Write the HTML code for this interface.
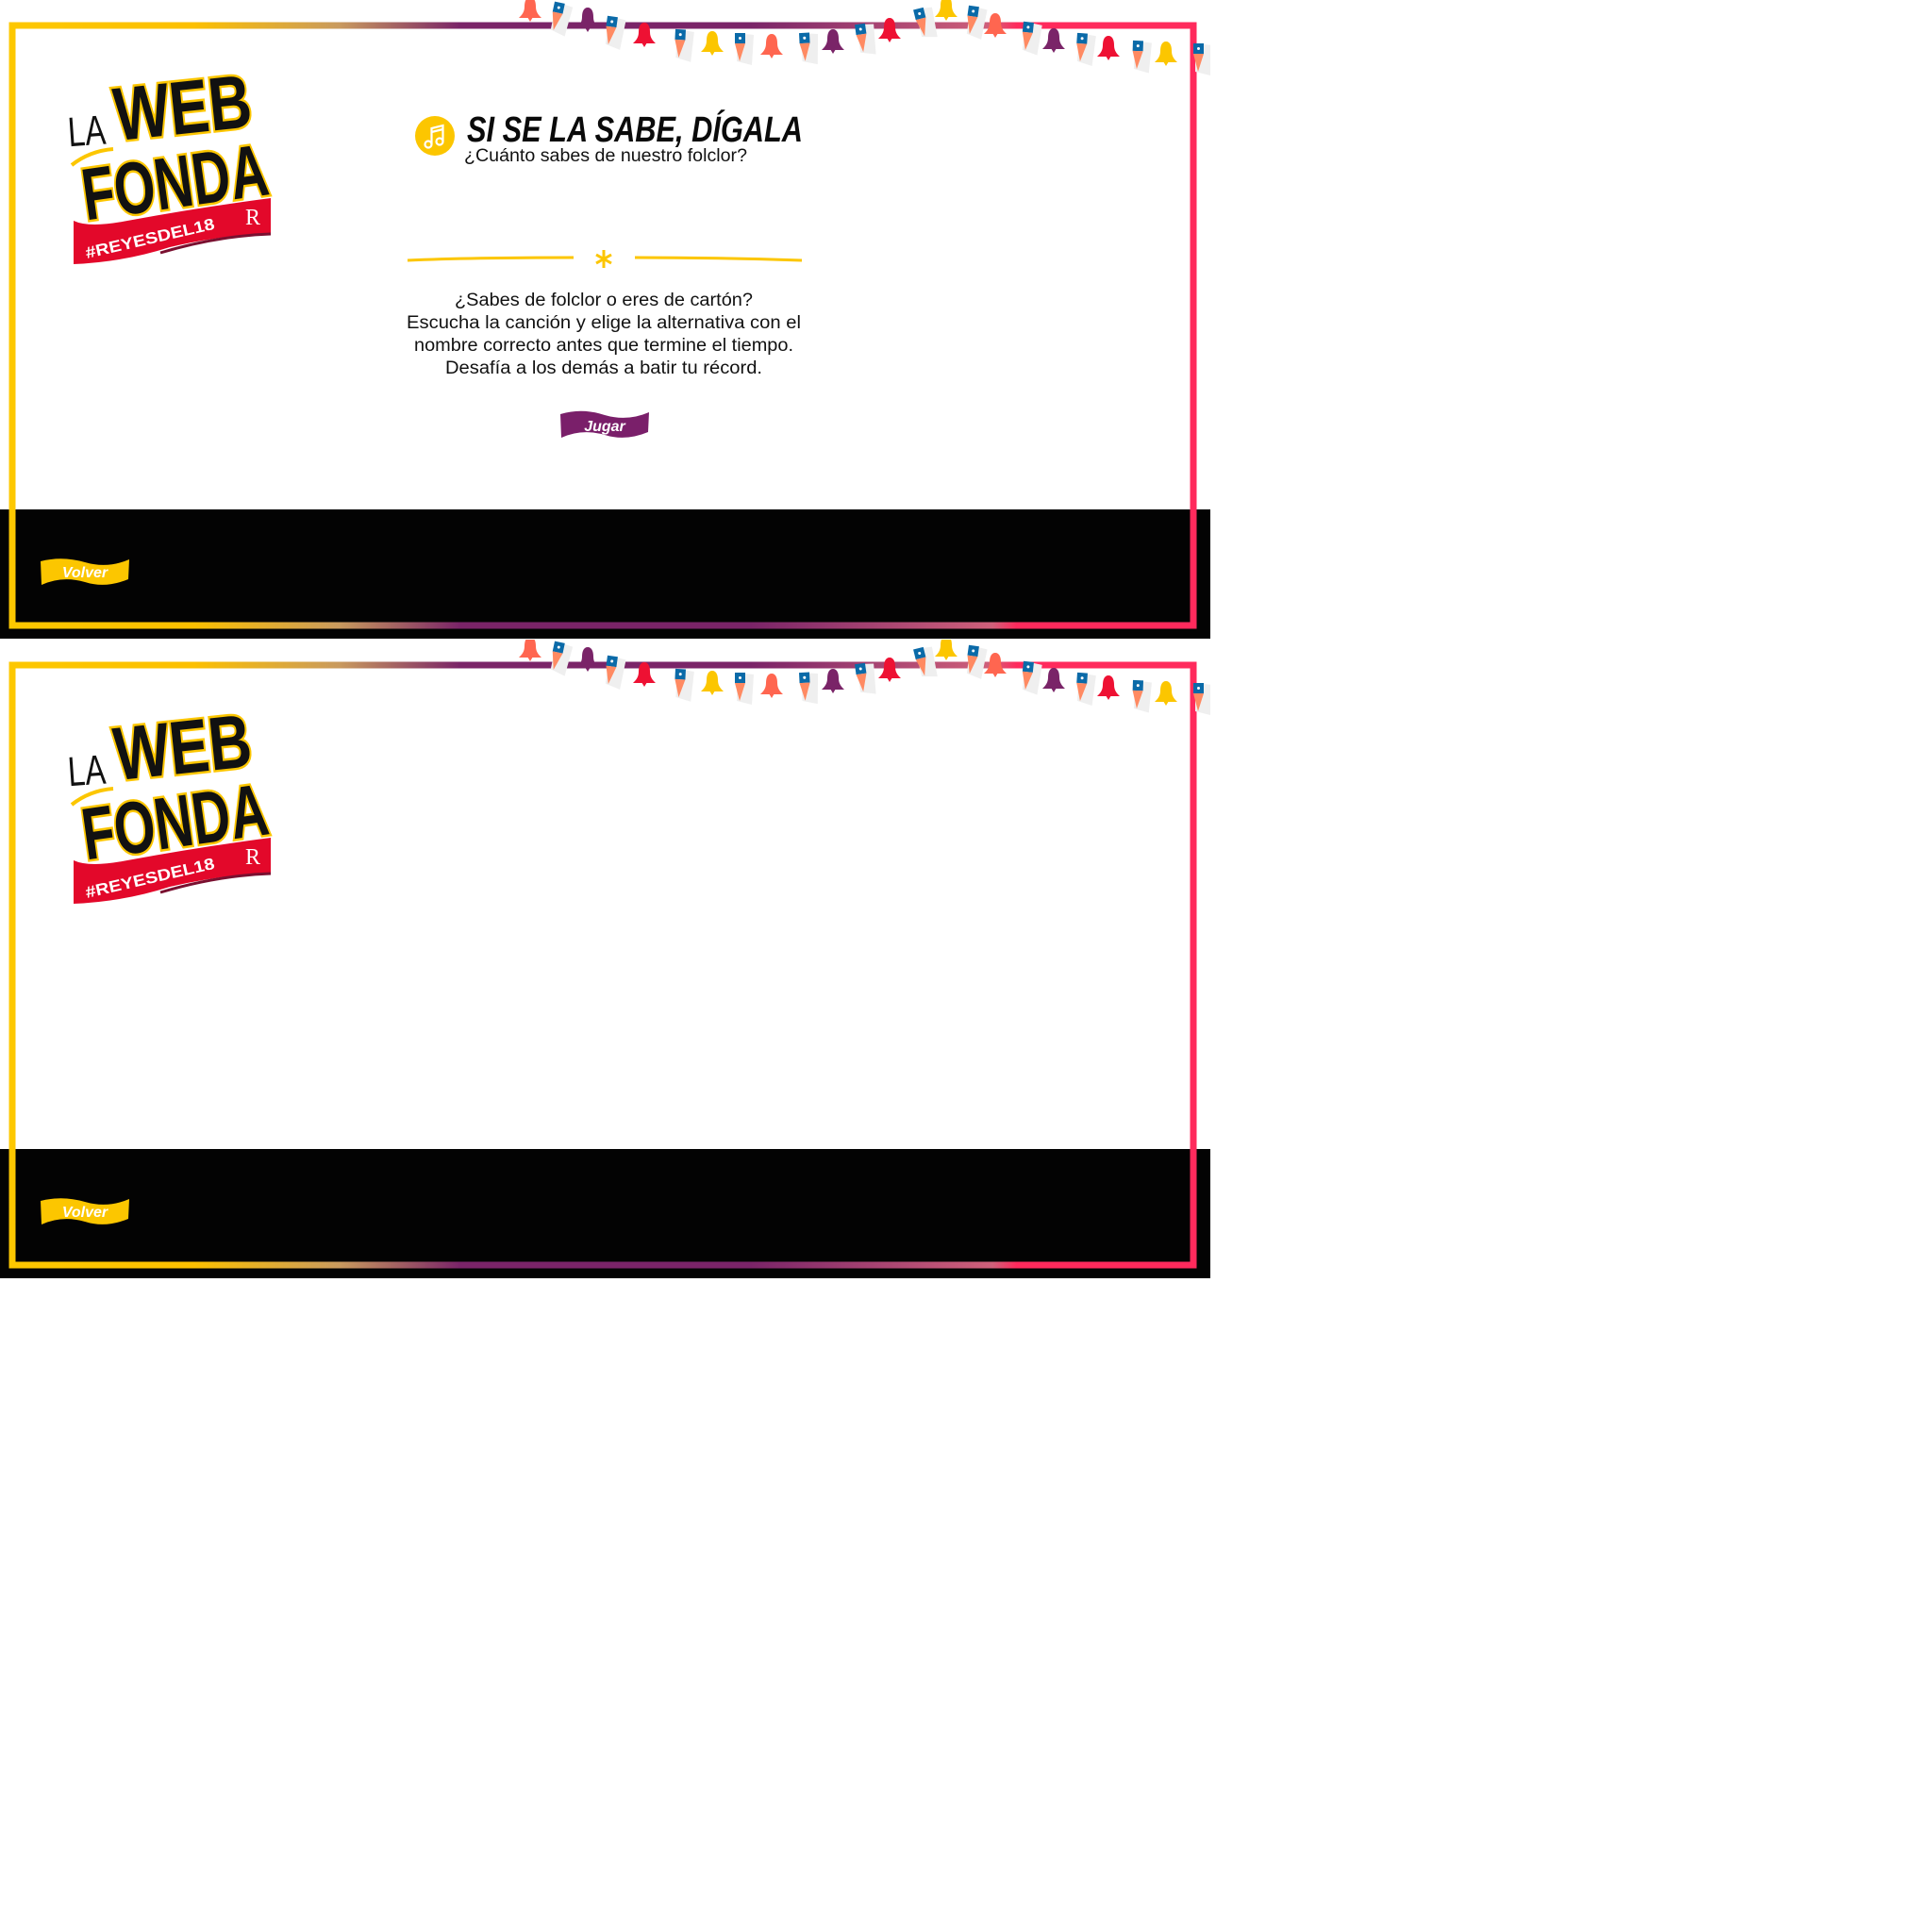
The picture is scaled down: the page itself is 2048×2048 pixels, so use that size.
<!DOCTYPE html>
<html><head><meta charset="utf-8"><style>
html,body{margin:0;padding:0;background:#fff;width:2048px;height:2048px;overflow:hidden}
svg{position:absolute;left:0;display:block}
</style></head><body>
<svg width="0" height="0" style="position:absolute">
<defs>
<linearGradient id="bg" gradientUnits="userSpaceOnUse" x1="0" y1="0" x2="1283" y2="0">
<stop offset="0" stop-color="#fdc800"/><stop offset="0.16" stop-color="#fcc000"/>
<stop offset="0.28" stop-color="#c99a5e"/><stop offset="0.38" stop-color="#7a2468"/>
<stop offset="0.62" stop-color="#7a2468"/><stop offset="0.82" stop-color="#d0607a"/>
<stop offset="0.84" stop-color="#ff2a5c"/><stop offset="1" stop-color="#ff2a5c"/>
</linearGradient>
<g id="bell"><path d="M0,0 C-4,0 -6,4 -6,10 C-6,16 -9,19 -12,22 L12,22 C9,19 6,16 6,10 C6,4 4,0 0,0 Z M-3,21 L0,26 L3,21Z"/></g>
<g id="flag"><polygon points="0,0 18,2 16,34 0,30" fill="#efefef"/><rect x="-2" y="0" width="11" height="11" fill="#0a6aa8"/><circle cx="3.5" cy="5.5" r="1.5" fill="#fff"/><polygon points="-2,11 9,11 3,30" fill="#ff8a62"/></g>
<g id="panel">
<rect x="0" y="540" width="1283" height="137" fill="#030303"/>
<rect x="13" y="27" width="1252" height="636" fill="none" stroke="url(#bg)" stroke-width="7"/>
<use href="#bell" x="562" y="-3" fill="#ff6650"/>
<use href="#flag" transform="translate(590,2) rotate(12)"/>
<use href="#bell" x="623" y="8" fill="#7a2468"/>
<use href="#flag" transform="translate(646,17) rotate(8)"/>
<use href="#bell" x="683" y="24" fill="#ee1133"/>
<use href="#flag" transform="translate(718,31) rotate(3)"/>
<use href="#bell" x="755" y="33" fill="#fcc600"/>
<use href="#flag" transform="translate(781,35)"/>
<use href="#bell" x="818" y="36" fill="#ff6650"/>
<use href="#flag" transform="translate(849,35) rotate(-3)"/>
<use href="#bell" x="883" y="31" fill="#7a2468"/>
<use href="#flag" transform="translate(908,26) rotate(-8)"/>
<use href="#bell" x="943" y="19" fill="#ee1133"/>
<use href="#flag" transform="translate(970,10) rotate(-14)"/>
<use href="#bell" x="1003" y="-4" fill="#fcc600"/>
<use href="#flag" transform="translate(1029,6) rotate(8)"/>
<use href="#bell" x="1055" y="14" fill="#ff6650"/>
<use href="#flag" transform="translate(1087,23) rotate(6)"/>
<use href="#bell" x="1117" y="30" fill="#7a2468"/>
<use href="#flag" transform="translate(1144,35) rotate(4)"/>
<use href="#bell" x="1175" y="38" fill="#ee1133"/>
<use href="#flag" transform="translate(1203,43) rotate(2)"/>
<use href="#bell" x="1236" y="44" fill="#fcc600"/>
<use href="#flag" transform="translate(1267,46)"/>
<!-- logo -->
<text x="72" y="154" font-family="Liberation Sans Narrow,Liberation Sans,sans-serif" font-size="44" textLength="40" lengthAdjust="spacingAndGlyphs" fill="#111" transform="rotate(-4 90 140)">LA</text>
<path d="M76,175 Q95,160 120,158" stroke="#fcc600" stroke-width="4" fill="none"/>
<text x="120" y="142" font-family="Liberation Sans,sans-serif" font-weight="bold" font-size="80" textLength="146" lengthAdjust="spacingAndGlyphs" fill="#111" stroke="#fcc600" stroke-width="5" paint-order="stroke" transform="rotate(-6 190 110)">WEB</text>
<text x="86" y="220" font-family="Liberation Sans,sans-serif" font-weight="bold" font-size="78" textLength="198" lengthAdjust="spacingAndGlyphs" fill="#111" stroke="#fcc600" stroke-width="5" paint-order="stroke" transform="rotate(-8 185 190)">FONDA</text>
<path d="M78,234 Q95,242 135,234 Q210,220 287,210 L287,247 Q230,250 180,262 Q130,278 78,280 Z" fill="#e3082a"/>
<path d="M170,268 Q230,250 287,248" stroke="#7a1030" stroke-width="3" fill="none"/>
<text x="92" y="274" font-family="Liberation Sans,sans-serif" font-weight="bold" font-size="17" fill="#fff" textLength="140" lengthAdjust="spacingAndGlyphs" transform="rotate(-13 92 274)">#REYESDEL18</text>
<text x="260" y="238" font-family="Liberation Serif,serif" font-size="24" fill="#fff">R</text>
<!-- volver -->
<path d="M43,595 Q66,589 90,596 Q114,603 137,593 L136,614 Q112,624 90,617 Q66,610 44,620 Z" fill="#fcc600"/>
<text x="90" y="612" text-anchor="middle" font-family="Liberation Sans,sans-serif" font-weight="bold" font-style="italic" font-size="16" fill="#fff">Volver</text>
</g>
</defs>
</svg>

<svg width="1283" height="677" style="top:0">
<use href="#panel"/>
<circle cx="461" cy="144" r="21" fill="#fcc600"/>
<g stroke="#fff" stroke-width="2.2" fill="none"><circle cx="454" cy="153" r="3.5"/><circle cx="466" cy="150" r="3.5"/><path d="M457.5,153 V136 L469.5,133 V150 M457.5,140 L469.5,137"/></g>
<text x="495" y="150" font-family="Liberation Sans,sans-serif" font-weight="bold" font-style="italic" font-size="38" textLength="356" lengthAdjust="spacingAndGlyphs" fill="#0a0a0a">SI SE LA SABE, DÍGALA</text>
<text x="492" y="171" font-family="Liberation Sans,sans-serif" font-size="19" textLength="300" lengthAdjust="spacingAndGlyphs" fill="#111">¿Cuánto sabes de nuestro folclor?</text>
<path d="M432,276 Q500,273 608,273" stroke="#fcc600" stroke-width="3" fill="none"/>
<path d="M673,273 Q760,273 850,276" stroke="#fcc600" stroke-width="3" fill="none"/>
<g stroke="#fcc600" stroke-width="3"><line x1="640" y1="265" x2="640" y2="284"/><line x1="632" y1="270" x2="648" y2="279"/><line x1="648" y1="270" x2="632" y2="279"/></g>
<g font-family="Liberation Sans,sans-serif" font-size="19" fill="#111" text-anchor="middle">
<text x="640" y="324" textLength="316" lengthAdjust="spacingAndGlyphs">¿Sabes de folclor o eres de cartón?</text>
<text x="640" y="348" textLength="418" lengthAdjust="spacingAndGlyphs">Escucha la canción y elige la alternativa con el</text>
<text x="640" y="372" textLength="402" lengthAdjust="spacingAndGlyphs">nombre correcto antes que termine el tiempo.</text>
<text x="640" y="396" textLength="336" lengthAdjust="spacingAndGlyphs">Desafía a los demás a batir tu récord.</text>
</g>
<path d="M594,439 Q617,432 641,440 Q665,447 688,437 L687,458 Q663,468 641,461 Q617,454 595,464 Z" fill="#7a1f6a"/>
<text x="641" y="457" text-anchor="middle" font-family="Liberation Sans,sans-serif" font-weight="bold" font-style="italic" font-size="16" fill="#fff">Jugar</text>
</svg>

<svg width="1283" height="677" style="top:678px">
<use href="#panel"/>
</svg>
</body></html>
